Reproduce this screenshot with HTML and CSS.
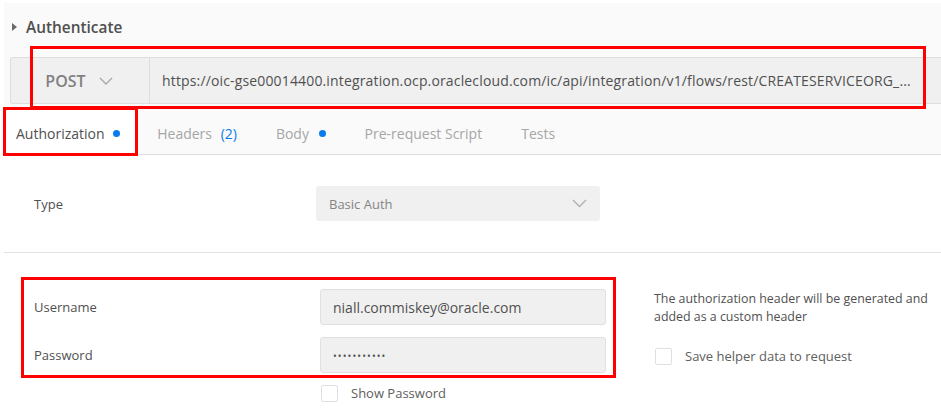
FILE: index.html
```html
<!DOCTYPE html>
<html>
<head>
<meta charset="utf-8">
<link rel="stylesheet" href="styles.css">
</head>
<body>
<div class="page">
  <div class="top">
    <div class="title-row">
      <span class="caret"></span>
      <span class="title">Authenticate</span>
    </div>
    <div class="urlbar">
      <div class="method">
        <span>POST</span>
        <svg class="chev" width="14" height="8" viewBox="0 0 14 8"><path d="M1 1 L7 7 L13 1" fill="none" stroke="#a8a8a8" stroke-width="1.4"/></svg>
      </div>
      <div class="url">https://oic-gse00014400.integration.ocp.oraclecloud.com/ic/api/integration/v1/flows/rest/CREATESERVICEORG_...</div>
    </div>
    <div class="tabs">
      <div class="tab active">Authorization <span class="dot"></span></div>
      <div class="tab">Headers <span class="count">(2)</span></div>
      <div class="tab">Body <span class="dot"></span></div>
      <div class="tab">Pre-request Script</div>
      <div class="tab">Tests</div>
    </div>
  </div>

  <div class="type-row">
    <div class="label">Type</div>
    <div class="select">
      <span>Basic Auth</span>
      <svg width="15" height="9" viewBox="0 0 15 9"><path d="M1 1 L7.5 7.5 L14 1" fill="none" stroke="#b0b0b0" stroke-width="1.4"/></svg>
    </div>
  </div>

  <div class="auth">
    <div class="fields">
      <div class="field-row">
        <div class="label">Username</div>
        <div class="input">niall.commiskey@oracle.com</div>
      </div>
      <div class="field-row">
        <div class="label">Password</div>
        <div class="input dots">•••••••••••</div>
      </div>
      <div class="check-row indent">
        <span class="box"></span>
        <span>Show Password</span>
      </div>
    </div>
    <div class="help">
      <p>The authorization header will be generated and added as a custom header</p>
      <div class="check-row">
        <span class="box"></span>
        <span>Save helper data to request</span>
      </div>
    </div>
  </div>

  <div class="mark m1"></div>
  <div class="mark m2"></div>
  <div class="mark m3"></div>
</div>
</body>
</html>
```

FILE: styles.css
```css
* { box-sizing: border-box; }
html, body { margin: 0; padding: 0; background: #fff; }
body {
  font-family: "Open Sans", "Liberation Sans", sans-serif;
  color: #505050;
  width: 941px;
  height: 409px;
  overflow: hidden;
}
.page {
  position: relative;
  padding: 3px 0 0 4px;
}
.top {
  background: #fafafa;
}
.title-row {
  height: 46px;
  display: flex;
  align-items: center;
  padding-left: 8px;
  padding-top: 2px;
}
.caret {
  width: 0; height: 0;
  border-top: 4px solid transparent;
  border-bottom: 4px solid transparent;
  border-left: 5px solid #6a6a6a;
  margin-right: 9px;
}
.title {
  font-size: 15.4px;
  font-weight: 600;
  color: #505050;
}
.urlbar {
  margin-left: 6px;
  margin-top: 8px;
  height: 47px;
  display: flex;
  background: #f0f0f0;
  border: 1px solid #dedede;
  border-right: none;
  border-radius: 3px 0 0 3px;
}
.method {
  width: 139px;
  flex: none;
  display: flex;
  align-items: center;
  justify-content: center;
  gap: 13px;
  border-right: 1px solid #dedede;
  font-size: 16px;
  font-weight: 600;
  color: #808080;
  padding: 1px 2px 0 0;
}
.url {
  flex: 1;
  display: flex;
  align-items: center;
  padding-left: 12px;
  font-size: 14px;
  letter-spacing: 0.15px;
  color: #505050;
  white-space: nowrap;
  overflow: hidden;
}
.tabs {
  display: flex;
  height: 46px;
  margin-top: 5px;
  border-bottom: 1px solid #dcdcdc;
}
.tab {
  display: flex;
  align-items: center;
  gap: 5px;
  padding: 3px 19.5px 0;
  font-size: 14px;
  color: #a6a6a6;
  white-space: pre;
}
.tab.active {
  padding: 3px 17.5px 0 12px;
  color: #505050;
  background: #fff;
}
.dot {
  width: 7px; height: 7px;
  border-radius: 50%;
  background: #097bed;
  display: inline-block;
}
.tab:nth-child(3) .dot { margin-left: 1px; }
.count { color: #097bed; }

.type-row {
  display: flex;
  align-items: center;
  padding: 31px 0 31px 30px;
  border-bottom: 1px solid #e2e2e2;
}
.label {
  font-size: 13px;
  color: #505050;
}
.type-row .label { width: 282px; }
.select {
  width: 284px;
  height: 35px;
  background: #f0f0f0;
  border-radius: 3px;
  display: flex;
  align-items: center;
  justify-content: space-between;
  padding: 0 13px;
  font-size: 13px;
  color: #858585;
}
.auth {
  display: flex;
  padding: 36px 0 0 30px;
}
.fields {
  flex: none;
  width: 620px;
  display: flex;
  flex-direction: column;
  gap: 12px;
}
.field-row {
  display: flex;
  align-items: center;
}
.field-row .label { width: 286px; }
.input {
  width: 286px;
  height: 36px;
  background: #f0f0f0;
  border: 1px solid #e0e0e0;
  border-radius: 3px;
  display: flex;
  align-items: center;
  padding: 0 12px;
  font-size: 14px;
  color: #505050;
}
.input.dots {
  font-size: 10px;
  letter-spacing: 1.1px;
  padding-top: 1px;
}
.check-row {
  display: flex;
  align-items: center;
  gap: 13px;
  font-size: 13px;
  color: #606060;
}
.check-row.indent { padding-left: 287px; margin-top: -1px; }
.box {
  width: 17px; height: 17px;
  border: 1px solid #e0e0e0;
  border-radius: 2px;
  background: #fff;
  flex: none;
}
.help {
  flex: 1;
  padding-top: 1px;
}
.help p {
  margin: 0 0 21px;
  font-size: 12.4px;
  line-height: 18px;
  color: #505050;
  width: 285px;
}
.help .check-row { padding-left: 1px; }

.mark {
  position: absolute;
  border: 3px solid #ff0000;
}
.m1 { left: 30px; top: 46px; width: 896px; height: 63px; }
.m2 { left: 3px; top: 107px; width: 135px; height: 49px; }
.m3 { left: 21px; top: 277px; width: 595px; height: 101px; }
```
